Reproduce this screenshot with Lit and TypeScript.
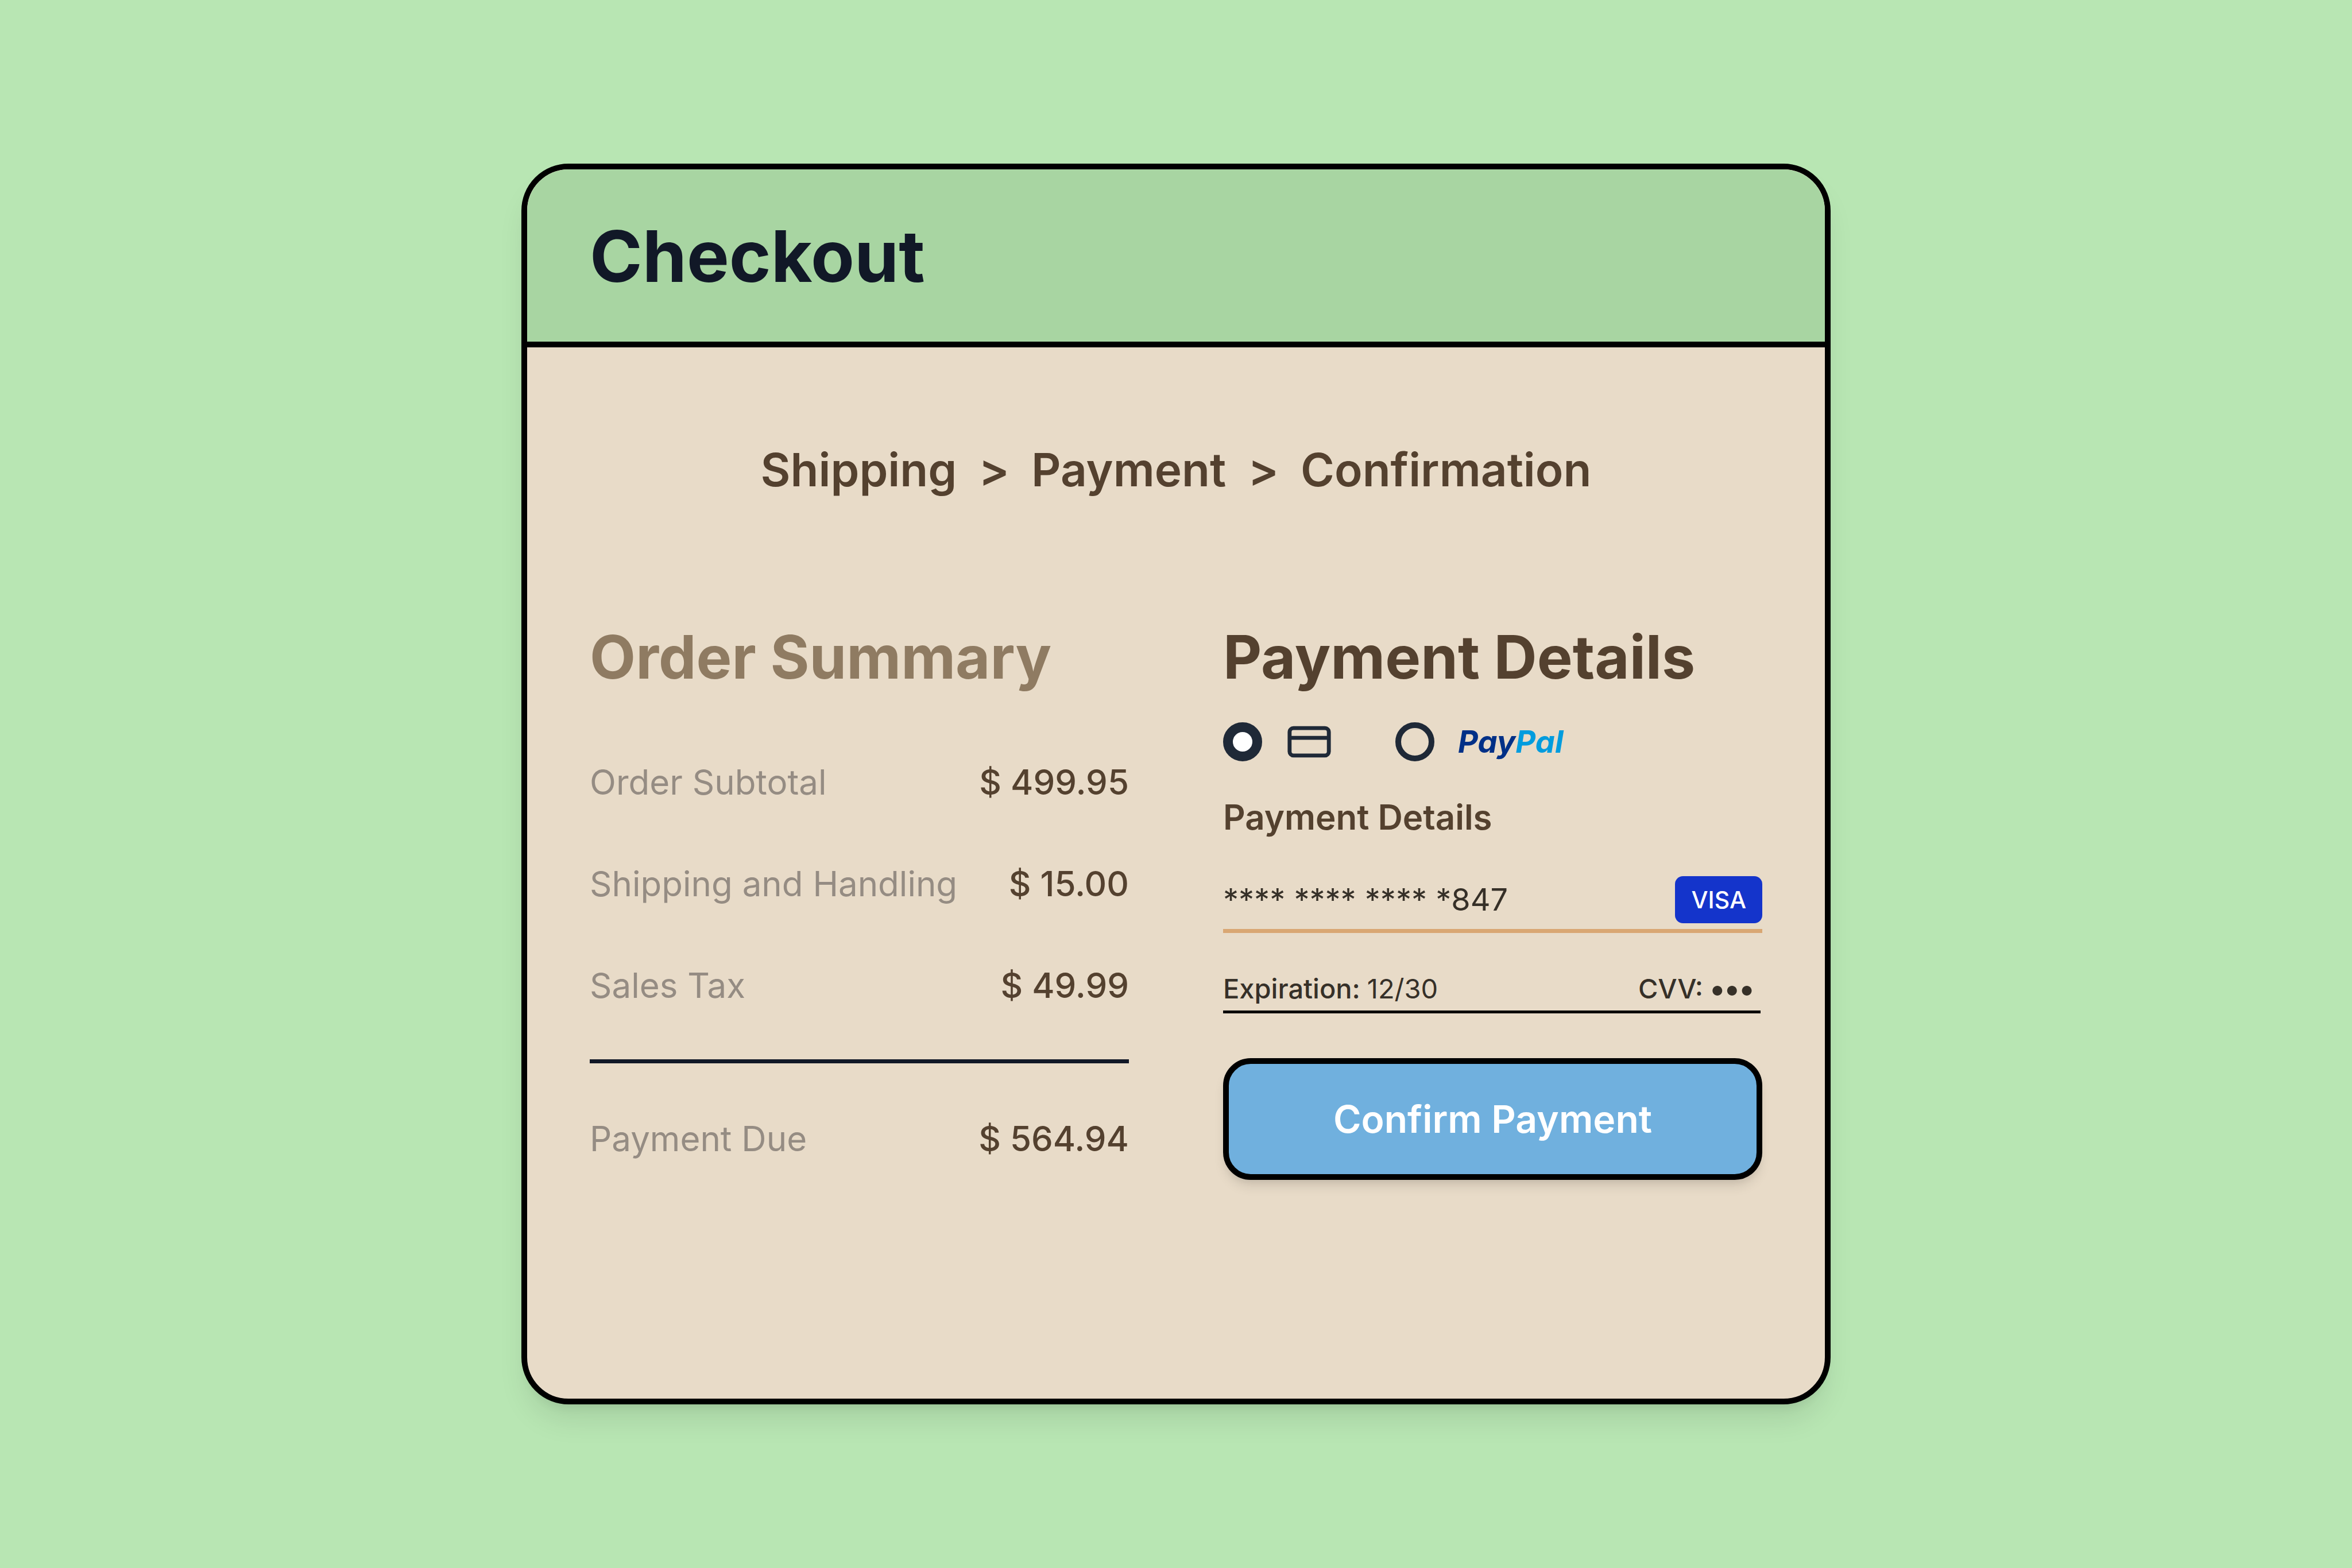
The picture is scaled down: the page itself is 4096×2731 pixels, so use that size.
import { LitElement, html, css } from "lit";
import { customElement, state } from "lit/decorators.js";

type Method = "card" | "paypal";

interface SummaryLine {
  label: string;
  amount: string;
}

@customElement("app-root")
export class AppRoot extends LitElement {
  static styles = css`
    :host {
      --ink: #54412f;
      --ink-soft: #8f7b62;
      --field: #363028;
      --label: #958c83;
      --night: #111827;
      --slate: #1f2937;
      display: flex;
      align-items: center;
      justify-content: center;
      box-sizing: border-box;
      min-height: 100vh;
      padding: 40px;
      background: #b8e6b3;
      color: var(--ink);
      font-family: Inter, "Liberation Sans", sans-serif;
      font-size: 60px;
      line-height: 74px;
    }
    h1,
    h2,
    h3,
    ol,
    dl,
    dd,
    fieldset {
      margin: 0;
      padding: 0;
      border: 0;
    }
    .card {
      box-sizing: border-box;
      width: 100%;
      max-width: 2280px;
      overflow: hidden;
      border: 10px solid #000;
      border-radius: 82px;
      background: #e8dbc8;
      box-shadow:
        0 34px 51px -10px rgb(0 0 0 / 0.1),
        0 14px 20px -14px rgb(0 0 0 / 0.1);
    }
    .header {
      padding: 76px 109px 74px;
      border-bottom: 10px solid #000;
      background: #a8d5a2;
    }
    .title {
      color: var(--night);
      font-size: 124px;
      font-weight: 700;
      line-height: 150px;
    }
    .body {
      padding: 163px 109px 381px;
    }
    .steps {
      display: flex;
      flex-wrap: wrap;
      justify-content: center;
      gap: 38px;
      margin-bottom: 214px;
      list-style: none;
      font-size: 80px;
      font-weight: 600;
      line-height: 100px;
    }
    .step {
      display: flex;
      gap: 38px;
    }
    .step a {
      color: inherit;
      text-decoration: none;
    }
    .columns {
      display: grid;
      grid-template-columns: repeat(auto-fit, minmax(min(100%, 800px), 1fr));
      gap: 164px;
    }
    .heading {
      font-size: 104px;
      font-weight: 700;
      line-height: 124px;
    }
    .heading.soft {
      color: var(--ink-soft);
    }
    .lines {
      display: flex;
      flex-direction: column;
      gap: 103px;
      margin-top: 119px;
    }
    .line {
      display: flex;
      justify-content: space-between;
    }
    .line dt {
      color: var(--label);
      font-weight: 400;
    }
    .line dd {
      font-weight: 500;
    }
    .total {
      margin-top: 92px;
      padding-top: 94px;
      border-top: 7px solid var(--night);
    }
    .methods {
      display: flex;
      gap: 109px;
      margin-top: 45px;
    }
    .method {
      display: flex;
      align-items: center;
      gap: 41px;
      height: 82px;
      font-size: 54px;
    }
    .radio {
      appearance: none;
      box-sizing: border-box;
      width: 68px;
      height: 68px;
      margin: 0;
      border: 10px solid var(--slate);
      border-radius: 50%;
    }
    .radio:checked {
      border-width: 17px;
      background: #fff;
    }
    .icon {
      width: 82px;
      height: 82px;
      fill: none;
      stroke: var(--slate);
      stroke-width: 2;
    }
    .paypal {
      color: #003087;
      font-style: italic;
      font-weight: 700;
    }
    .paypal-end {
      color: #009cde;
    }
    .subheading {
      margin-top: 53px;
      font-size: 60px;
      font-weight: 600;
    }
    .field {
      display: flex;
      align-items: center;
      color: var(--field);
    }
    .number {
      margin-top: 66px;
      padding-bottom: 10px;
      border-bottom: 7px solid #d9a773;
      font-size: 54px;
    }
    .extra {
      justify-content: space-between;
      margin: 68px 3px 0 0;
      padding-bottom: 9px;
      border-bottom: 5px solid #000;
      font-size: 47px;
      line-height: 58px;
    }
    .pair {
      display: flex;
      align-items: center;
      gap: 12px;
      height: 58px;
      font-weight: 500;
    }
    .input {
      min-width: 0;
      margin: 0;
      padding: 0;
      border: 0;
      outline: 0;
      background: none;
      color: inherit;
      font: inherit;
      font-weight: 400;
    }
    .number .input {
      flex: 1;
    }
    .expiry {
      width: 160px;
    }
    .cvv {
      width: 88px;
      font-size: 54px;
      font-weight: 700;
    }
    .visa {
      padding: 0 28px;
      border-radius: 14px;
      background: #1434cb;
      color: #fff;
      font-size: 41px;
      font-weight: 500;
      line-height: 82px;
    }
    .confirm {
      box-sizing: border-box;
      width: 100%;
      margin: 78px 0 0;
      padding: 55px;
      border: 10px solid #000;
      border-radius: 48px;
      background: #70b0de;
      box-shadow:
        0 14px 20px -3px rgb(0 0 0 / 0.1),
        0 7px 14px -7px rgb(0 0 0 / 0.1);
      color: #fff;
      font: inherit;
      font-size: 66px;
      font-weight: 600;
      line-height: 82px;
    }
  `;

  @state() private method: Method = "card";

  private steps = ["Shipping", "Payment", "Confirmation"];

  private lines: SummaryLine[] = [
    { label: "Order Subtotal", amount: "$ 499.95" },
    { label: "Shipping and Handling", amount: "$ 15.00" },
    { label: "Sales Tax", amount: "$ 49.99" },
  ];

  private renderLine(line: SummaryLine) {
    return html`<div class="line">
      <dt>${line.label}</dt>
      <dd>${line.amount}</dd>
    </div>`;
  }

  private renderRadio(value: Method, label: string) {
    return html`<input
      class="radio"
      type="radio"
      name="method"
      id=${value}
      aria-label=${label}
      .checked=${this.method === value}
      @change=${() => (this.method = value)}
    />`;
  }

  render() {
    return html`
      <main class="card">
        <header class="header"><h1 class="title">Checkout</h1></header>
        <div class="body">
          <nav aria-label="Progress">
            <ol class="steps">
              ${this.steps.map(
                (step, i) => html`<li class="step">
                  ${i > 0 ? html`<span aria-hidden="true">&gt;</span>` : ""}
                  <a href="#${step.toLowerCase()}">${step}</a>
                </li>`
              )}
            </ol>
          </nav>
          <div class="columns">
            <section>
              <h2 class="heading soft">Order Summary</h2>
              <dl class="lines">${this.lines.map((l) => this.renderLine(l))}</dl>
              <dl class="total">
                ${this.renderLine({ label: "Payment Due", amount: "$ 564.94" })}
              </dl>
            </section>
            <form @submit=${(e: Event) => e.preventDefault()}>
              <h2 class="heading">Payment Details</h2>
              <fieldset class="methods" aria-label="Payment method">
                <label class="method" for="card">
                  ${this.renderRadio("card", "Credit card")}
                  <svg class="icon" viewBox="0 0 24 24" aria-hidden="true">
                    <rect x="2" y="5" width="20" height="14" rx="2" />
                    <path d="M2 10h20" />
                  </svg>
                </label>
                <label class="method" for="paypal">
                  ${this.renderRadio("paypal", "PayPal")}
                  <span class="paypal">Pay<span class="paypal-end">Pal</span></span>
                </label>
              </fieldset>
              <h3 class="subheading">Payment Details</h3>
              <div class="field number">
                <input
                  class="input"
                  type="text"
                  aria-label="Card number"
                  .value=${"**** **** **** *847"}
                />
                <span class="visa">VISA</span>
              </div>
              <div class="field extra">
                <div class="pair">
                  <label for="expiry">Expiration:</label>
                  <input class="input expiry" id="expiry" type="text" .value=${"12/30"} />
                </div>
                <div class="pair">
                  <label for="cvv">CVV:</label>
                  <input class="input cvv" id="cvv" type="text" .value=${"•••"} />
                </div>
              </div>
              <button class="confirm" type="submit">Confirm Payment</button>
            </form>
          </div>
        </div>
      </main>
    `;
  }
}
